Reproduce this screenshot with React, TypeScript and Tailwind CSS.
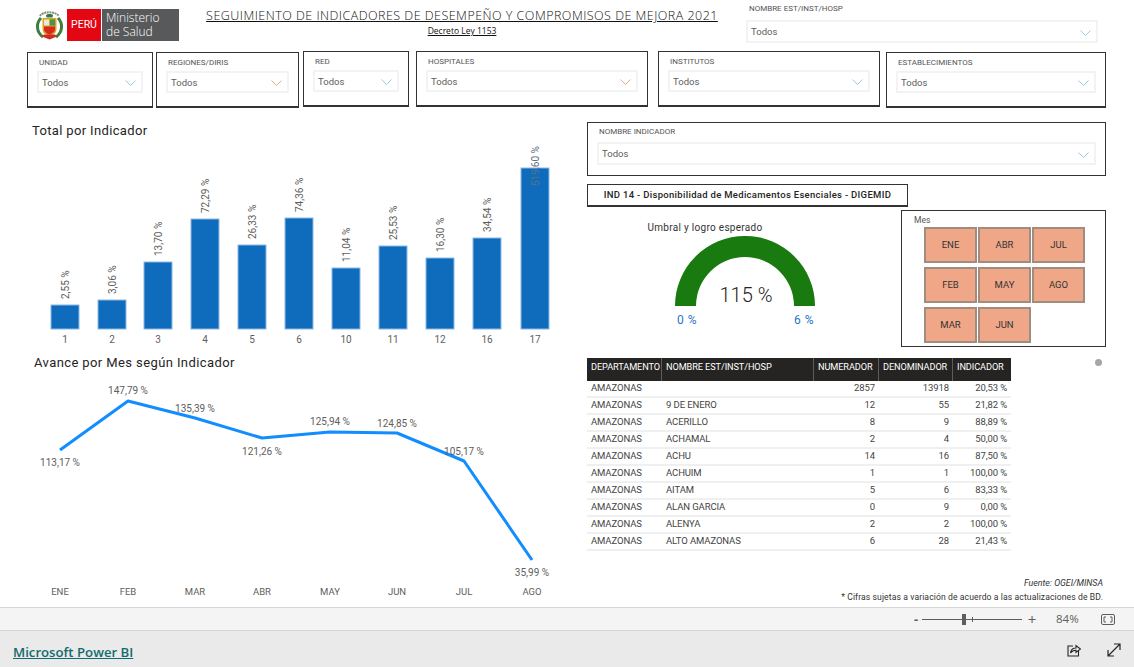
const bars = [
  { name: "1", value: "2,55 %", x: 65, top: 305 },
  { name: "2", value: "3,06 %", x: 112, top: 300 },
  { name: "3", value: "13,70 %", x: 158, top: 262 },
  { name: "4", value: "72,29 %", x: 205, top: 219 },
  { name: "5", value: "26,33 %", x: 252, top: 245 },
  { name: "6", value: "74,36 %", x: 299, top: 218 },
  { name: "10", value: "11,04 %", x: 346, top: 268 },
  { name: "11", value: "25,53 %", x: 393, top: 246 },
  { name: "12", value: "16,30 %", x: 440, top: 258 },
  { name: "16", value: "34,54 %", x: 487, top: 238 },
  { name: "17", value: "519,60 %", x: 535, top: 192 },
];

const months = [
  { name: "ENE", value: "113,17 %", x: 60, y: 450, ly: 466 },
  { name: "FEB", value: "147,79 %", x: 128, y: 401, ly: 394 },
  { name: "MAR", value: "135,39 %", x: 195, y: 418, ly: 412 },
  { name: "ABR", value: "121,26 %", x: 262, y: 438, ly: 455 },
  { name: "MAY", value: "125,94 %", x: 330, y: 432, ly: 425 },
  { name: "JUN", value: "124,85 %", x: 397, y: 433, ly: 427 },
  { name: "JUL", value: "105,17 %", x: 464, y: 461, ly: 455 },
  { name: "AGO", value: "35,99 %", x: 532, y: 560, ly: 576 },
];

const rows = [
  ["AMAZONAS", "", "2857", "13918", "20,53 %"],
  ["AMAZONAS", "9 DE ENERO", "12", "55", "21,82 %"],
  ["AMAZONAS", "ACERILLO", "8", "9", "88,89 %"],
  ["AMAZONAS", "ACHAMAL", "2", "4", "50,00 %"],
  ["AMAZONAS", "ACHU", "14", "16", "87,50 %"],
  ["AMAZONAS", "ACHUIM", "1", "1", "100,00 %"],
  ["AMAZONAS", "AITAM", "5", "6", "83,33 %"],
  ["AMAZONAS", "ALAN GARCIA", "0", "9", "0,00 %"],
  ["AMAZONAS", "ALENYA", "2", "2", "100,00 %"],
  ["AMAZONAS", "ALTO AMAZONAS", "6", "28", "21,43 %"],
];

const mesButtons = ["ENE", "ABR", "JUL", "FEB", "MAY", "AGO", "MAR", "JUN"];

function Chevron({ color = "#9ccbe0" }: { color?: string }) {
  return (
    <svg width="11" height="6" viewBox="0 0 11 6" fill="none" stroke={color} strokeWidth="1">
      <path d="M0.5 0.5 L5.5 5.5 L10.5 0.5" />
    </svg>
  );
}

function Dropdown({ className, color }: { className: string; color?: string }) {
  return (
    <div className={`flex items-center justify-between border-2 border-[#f3f3f3] pl-[3px] pr-[5px] pt-[2px] text-[9.5px] text-[#605e5c] ${className}`}>
      <span>Todos</span>
      <Chevron color={color} />
    </div>
  );
}

function Slicer({ label, className, color }: { label: string; className: string; color?: string }) {
  return (
    <div className={`h-[56px] shrink-0 border border-b-2 border-[#333333] pl-[9px] pr-[9px] pt-[4px] ${className}`}>
      <div className="h-[14px] pl-[2px] text-[8px] leading-[11px] text-[#555555]">{label}</div>
      <Dropdown className="h-[22px]" color={color} />
    </div>
  );
}

function Crest() {
  return (
    <svg width="29" height="32" viewBox="0 0 29 32" className="shrink-0">
      <path d="M5 7 C8 2 20 2 24 7" fill="none" stroke="#8a8a80" strokeWidth="2" strokeDasharray="2 0.6" />
      <path d="M6 9 C1 14 1 23 8 28" fill="none" stroke="#3f7d3a" strokeWidth="3" />
      <path d="M23 9 C28 14 28 23 21 28" fill="none" stroke="#3f7d3a" strokeWidth="3" />
      <path d="M11 6 C12 4.5 17 4.5 18 6 L17.5 8.5 H11.5 Z" fill="#2f7d3b" />
      <path d="M7.5 9 H21.5 V20 C21.5 24 18 26 14.5 27.5 C11 26 7.5 24 7.5 20 Z" fill="#d9a521" />
      <rect x="9" y="10.5" width="5.2" height="6" fill="#e6ead8" />
      <rect x="14.8" y="10.5" width="5.2" height="6" fill="#4c9153" />
      <path d="M9 17.5 H20 V20 C20 23 17 24.5 14.5 25.5 C12 24.5 9 23 9 20 Z" fill="#d8291f" />
      <path d="M7 27.5 L14.5 30.5 L22 27.5 L20 25.5 H9 Z" fill="#cf2a26" />
    </svg>
  );
}

function Logo() {
  return (
    <div className="ml-[35px] mt-[9px] flex h-[32px] w-[144px] shrink-0 items-stretch">
      <Crest />
      <div className="ml-[3px] flex w-[34px] shrink-0 items-center justify-center bg-[#e30613] text-[10.5px] text-white">PERÚ</div>
      <div className="ml-[1px] flex flex-1 flex-col justify-center bg-[#58595b] pl-[4px] font-['Open_Sans',sans-serif] text-[12px] font-light leading-[14px] text-white">
        <span>Ministerio</span>
        <span>de Salud</span>
      </div>
    </div>
  );
}

function BarChart() {
  return (
    <svg width="587" height="210" viewBox="0 140 587 210" className="block">
      {bars.map((b) => {
        const isLast = b.name === "17";
        const barTop = isLast ? 168 : b.top;
        return (
          <g key={b.name}>
            <rect x={b.x - 14} y={barTop} width="28" height={329 - barTop} fill="#0f6cbd" stroke="#8db8e4" strokeWidth="1" />
            <text
              transform={`translate(${b.x + 3.5} ${b.top - 6}) rotate(-90)`}
              fontSize="10"
              fill={isLast ? "#5b6f82" : "#605e5c"}
            >
              {b.value}
            </text>
            <text x={b.x} y="343" fontSize="10" fill="#605e5c" textAnchor="middle">
              {b.name}
            </text>
          </g>
        );
      })}
    </svg>
  );
}

function LineChart() {
  return (
    <svg width="587" height="225" viewBox="0 375 587 225" className="block">
      <polyline
        points={months.map((m) => `${m.x},${m.y}`).join(" ")}
        fill="none"
        stroke="#118dff"
        strokeWidth="3"
        strokeLinejoin="round"
      />
      {months.map((m) => (
        <g key={m.name}>
          <text x={m.x} y={m.ly} fontSize="10" fill="#605e5c" textAnchor="middle">
            {m.value}
          </text>
          <text x={m.x} y="595" fontSize="9.5" fill="#605e5c" textAnchor="middle">
            {m.name}
          </text>
        </g>
      ))}
    </svg>
  );
}

function Gauge() {
  return (
    <svg width="314" height="137" viewBox="587 210 314 137" className="block shrink-0">
      <text x="705" y="231" fontSize="10" fill="#333333" textAnchor="middle" letterSpacing="0.3">
        Umbral y logro esperado
      </text>
      <path d="M675 306 A70 70 0 0 1 815 306 L794 306 A49 49 0 0 0 696 306 Z" fill="#197a0f" />
      <text x="746" y="302" fontSize="20" fontWeight="300" fill="#252423" textAnchor="middle">
        115 %
      </text>
      <text x="687" y="324" fontSize="12" fill="#2a74c5" textAnchor="middle" letterSpacing="0.5">
        0 %
      </text>
      <text x="804" y="324" fontSize="12" fill="#2a74c5" textAnchor="middle" letterSpacing="0.5">
        6 %
      </text>
    </svg>
  );
}

function MesSlicer() {
  return (
    <div className="h-[137px] w-[205px] shrink-0 border border-[#333333] pl-[22px] pt-[3px]">
      <div className="-ml-[10px] h-[13px] text-[8.5px] leading-[12px] text-[#555555]">Mes</div>
      <div className="grid grid-cols-[53px_53px_53px] gap-x-[1px] gap-y-[4px]">
        {mesButtons.map((m) => (
          <div
            key={m}
            className="flex h-[36px] items-center justify-center border-2 border-[#a08d80] bg-[#f0a787] text-[9.5px] text-[#333333]"
          >
            {m}
          </div>
        ))}
      </div>
    </div>
  );
}

function DataTable() {
  const headCell = "flex h-[23px] items-start border-r border-[#5c5c5c] px-[4px] pt-[1px] leading-[15px]";
  return (
    <div className="w-[424px] text-[9.5px]">
      <div className="grid grid-cols-[75px_152px_65px_74px_58px] bg-[#252423] text-[9.2px] tracking-[-0.1px] text-white">
        <div className={headCell}>DEPARTAMENTO</div>
        <div className={headCell}>NOMBRE EST/INST/HOSP</div>
        <div className={headCell}>NUMERADOR</div>
        <div className={headCell}>DENOMINADOR</div>
        <div className="flex h-[23px] items-start px-[4px] pt-[1px] leading-[15px]">INDICADOR</div>
      </div>
      {rows.map((r, i) => (
        <div key={i} className="grid h-[17px] grid-cols-[75px_152px_65px_74px_58px] items-center border-b-2 border-[#f0f0f0] tracking-[-0.1px] text-[#444444]">
          <div className="px-[4px]">{r[0]}</div>
          <div className="px-[4px]">{r[1]}</div>
          <div className="px-[4px] text-right">{r[2]}</div>
          <div className="px-[4px] text-right">{r[3]}</div>
          <div className="px-[4px] text-right">{r[4]}</div>
        </div>
      ))}
    </div>
  );
}

function ZoomBar() {
  return (
    <div className="flex h-[24px] shrink-0 items-center justify-end border-y border-[#d6d6d6] bg-[#f4f4f4] pr-[19px] font-['Open_Sans',sans-serif] text-[#605e5c]">
      <span className="w-[8px] text-center text-[13px] font-bold leading-none">-</span>
      <div className="relative ml-[2px] h-[1px] w-[100px] bg-[#605e5c]">
        <div className="absolute left-[40px] top-[-5px] h-[11px] w-[4px] bg-[#605e5c]" />
        <div className="absolute left-[50px] top-[-2px] h-[5px] w-[1px] bg-[#605e5c]" />
      </div>
      <span className="ml-[4px] w-[12px] text-center text-[15px] leading-none">+</span>
      <span className="ml-[18px] w-[22px] text-[11.5px]">84%</span>
      <svg width="14" height="11" viewBox="0 0 14 11" className="ml-[23px]" fill="none" stroke="#605e5c">
        <rect x="0.5" y="0.5" width="13" height="10" rx="1.5" />
        <path d="M5 3 H3 V8 H5 M9 3 H11 V8 H9" />
      </svg>
    </div>
  );
}

function Footer() {
  return (
    <div className="flex h-[36px] flex-1 items-center justify-between bg-[#eaeaea] pl-[13px] pr-[13px]">
      <span className="pt-[5px] font-['Open_Sans',sans-serif] text-[13.2px] font-semibold leading-[20px] text-[#136b6f] underline">Microsoft Power BI</span>
      <div className="flex items-center gap-[26px] pt-[2px]">
        <svg width="14" height="14" viewBox="0 0 14 14" fill="none" stroke="#252423" strokeWidth="1.1">
          <path d="M6 3 H1 V13 H11.5 V8" />
          <path d="M3.5 10 C4 6.5 6 5 9 5 V2.5 L13.5 6 L9 9.5 V7.2 C6.5 7.2 4.8 8 3.5 10 Z" />
        </svg>
        <svg width="14" height="14" viewBox="0 0 14 14" fill="none" stroke="#252423" strokeWidth="1.2">
          <path d="M1 13 L13 1 M7 1 H13 V7 M1 7 V13 H7" />
        </svg>
      </div>
    </div>
  );
}

export default function App() {
  return (
    <div className="flex h-[667px] w-[1134px] flex-col overflow-hidden bg-white font-['Roboto',sans-serif]">
      <div className="h-[607px] shrink-0">
        {/* cabecera */}
        <div className="flex h-[51px]">
          <Logo />
          <div className="ml-[26px] w-[514px] shrink-0 pt-[7px] text-center font-['Open_Sans',sans-serif] text-[#111111]">
            <div className="text-[12.5px] font-light leading-[17px] tracking-[0.48px] underline">
              SEGUIMIENTO DE INDICADORES DE DESEMPEÑO Y COMPROMISOS DE MEJORA 2021
            </div>
            <div className="text-[8.5px] leading-[13px] underline">Decreto Ley 1153</div>
          </div>
          <div className="ml-[27px] w-[352px] shrink-0 pt-[4px]">
            <div className="h-[16px] pl-[3px] text-[8px] leading-[10px] text-[#555555]">NOMBRE EST/INST/HOSP</div>
            <Dropdown className="h-[23px]" />
          </div>
        </div>

        {/* filtros */}
        <div className="flex h-[56px]">
          <Slicer label="UNIDAD" className="ml-[27px] mt-[1px] w-[126px]" />
          <Slicer label="REGIONES/DIRIS" className="ml-[3px] mt-[1px] w-[143px]" color="#e3a98c" />
          <Slicer label="RED" className="ml-[4px] w-[106px]" />
          <Slicer label="HOSPITALES" className="ml-[7px] w-[232px]" color="#e3a98c" />
          <Slicer label="INSTITUTOS" className="ml-[10px] w-[222px]" />
          <Slicer label="ESTABLECIMIENTOS" className="ml-[6px] mt-[1px] w-[220px]" />
        </div>

        <div className="flex">
          {/* columna izquierda */}
          <div className="w-[587px] shrink-0">
            <div className="h-[33px] pl-[32px] pt-[15px] text-[13px] leading-[18px] tracking-[0.35px] text-[#252423]">Total por Indicador</div>
            <BarChart />
            <div className="h-[25px] pl-[34px] pt-[4px] text-[13px] leading-[18px] tracking-[0.4px] text-[#252423]">Avance por Mes según Indicador</div>
            <LineChart />
          </div>

          {/* columna derecha */}
          <div className="w-[519px] shrink-0 pt-[15px]">
            <div className="h-[54px] border border-[#333333] pl-[9px] pr-[9px] pt-[3px]">
              <div className="h-[16px] pl-[2px] text-[8px] leading-[12px] text-[#555555]">NOMBRE INDICADOR</div>
              <Dropdown className="h-[23px]" />
            </div>
            <div className="mt-[8px] flex h-[23px] w-[321px] items-center justify-center border border-b-2 border-[#333333] text-[9.5px] font-medium tracking-[0.3px] text-[#252423]">
              IND 14 - Disponibilidad de Medicamentos Esenciales - DIGEMID
            </div>
            <div className="mt-[3px] flex">
              <Gauge />
              <MesSlicer />
            </div>
            <div className="mt-[11px] flex">
              <DataTable />
              <div className="ml-[84px] mt-[1px] h-[7px] w-[7px] rounded-full bg-[#a6a6a6]" />
            </div>
            <div className="mt-[25px] pr-[3px] text-right text-[8.6px] leading-[14px] text-[#333333]">
              <div className="text-[8.8px] italic">Fuente: OGEI/MINSA</div>
              <div className="tracking-[0.1px]">* Cifras sujetas a variación de acuerdo a las actualizaciones de BD.</div>
            </div>
          </div>
        </div>
      </div>
      <ZoomBar />
      <Footer />
    </div>
  );
}
